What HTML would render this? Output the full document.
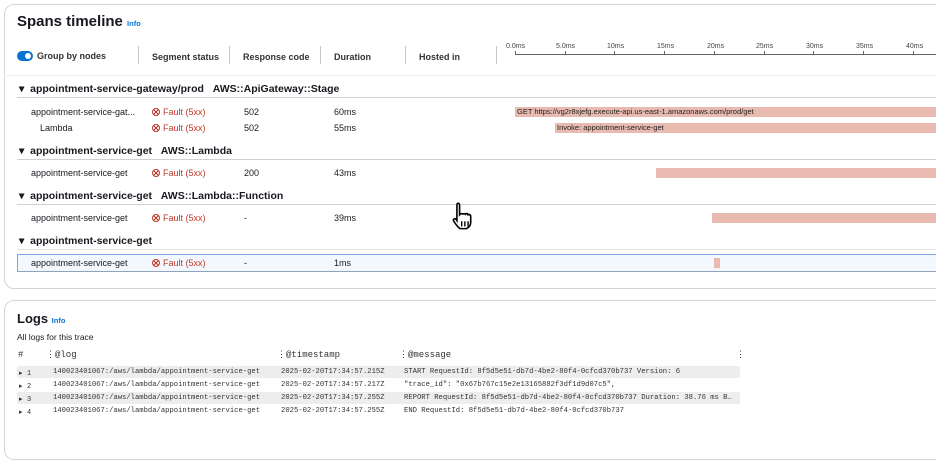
<!DOCTYPE html>
<html><head><style>
*{margin:0;padding:0;box-sizing:border-box}
body{width:936px;height:438px;overflow:hidden;background:#fff;font-family:"Liberation Sans",sans-serif;color:#16191f;position:relative}
.a{position:absolute;white-space:nowrap}
.panel{position:absolute;border:1px solid #d5d5d5;border-radius:10px;background:#fff}
.h{font-size:9px;font-weight:bold;color:#333}
.sep{position:absolute;width:1px;background:#c6c6c6}
.g{font-size:10.5px;font-weight:bold}
.r{font-size:9px}
.f{font-size:9px;color:#c0392b}
.f:before{content:"";display:inline-block;width:8px;height:8px;border:1.2px solid #c0392b;border-radius:50%;margin-right:3px;vertical-align:-1px;box-sizing:border-box;background:linear-gradient(45deg,transparent 44%,#c0392b 44%,#c0392b 56%,transparent 56%),linear-gradient(-45deg,transparent 44%,#c0392b 44%,#c0392b 56%,transparent 56%)}
.line{position:absolute;height:1px;background:#d0d0d0;left:17px;right:0}
.bar{position:absolute;background:#e8bab0;height:10px;font-size:7.5px;line-height:10px;padding-left:2px;color:#222}
.tk{position:absolute;top:43px;font-size:7px;color:#444}
.tt{position:absolute;top:51px;width:1px;height:4px;background:#666}
.m{font-family:"Liberation Mono",monospace;font-size:7.2px;color:#333}
.lr{position:absolute;left:17px;width:723px;height:12px}
</style></head><body>
<div class="panel" style="left:4px;top:4px;width:960px;height:285px"></div>
<div class="a" style="left:17px;top:13px;font-size:15px;font-weight:bold">Spans timeline <span style="font-size:7.5px;color:#0972d3">Info</span></div>
<div class="a" style="left:17px;top:51px;width:16px;height:10px;border-radius:5px;background:#0972d3"><div style="position:absolute;right:2px;top:2px;width:6px;height:6px;border-radius:50%;background:#fff"></div></div>
<div class="a h" style="left:37px;top:51px">Group by nodes</div>
<div class="sep" style="left:138px;top:46px;height:18px"></div>
<div class="a h" style="left:152px;top:52px">Segment status</div>
<div class="sep" style="left:229px;top:46px;height:18px"></div>
<div class="a h" style="left:243px;top:52px">Response code</div>
<div class="sep" style="left:320px;top:46px;height:18px"></div>
<div class="a h" style="left:334px;top:52px">Duration</div>
<div class="sep" style="left:405px;top:46px;height:18px"></div>
<div class="a h" style="left:419px;top:52px">Hosted in</div>
<div class="sep" style="left:496px;top:46px;height:18px"></div>
<div class="a" style="left:515px;top:54px;width:421px;height:1px;background:#666"></div>
<div class="tk" style="left:506px">0.0ms</div><div class="tt" style="left:515px"></div>
<div class="tk" style="left:556px">5.0ms</div><div class="tt" style="left:565px"></div>
<div class="tk" style="left:607px">10ms</div><div class="tt" style="left:614px"></div>
<div class="tk" style="left:657px">15ms</div><div class="tt" style="left:664px"></div>
<div class="tk" style="left:707px">20ms</div><div class="tt" style="left:714px"></div>
<div class="tk" style="left:756px">25ms</div><div class="tt" style="left:764px"></div>
<div class="tk" style="left:806px">30ms</div><div class="tt" style="left:813px"></div>
<div class="tk" style="left:856px">35ms</div><div class="tt" style="left:863px"></div>
<div class="tk" style="left:906px">40ms</div><div class="tt" style="left:913px"></div>
<div class="a" style="left:4px;top:75px;width:932px;height:1px;background:#f0f0f0"></div>

<div class="a g" style="left:19px;top:83px">▾&nbsp; appointment-service-gateway/prod &nbsp;&nbsp;AWS::ApiGateway::Stage</div>
<div class="line" style="top:97px"></div>
<div class="a r" style="left:31px;top:107px">appointment-service-gat...</div>
<div class="a f" style="left:152px;top:107px">Fault (5xx)</div>
<div class="a r" style="left:244px;top:107px">502</div>
<div class="a r" style="left:334px;top:107px">60ms</div>
<div class="bar" style="left:515px;right:0;top:107px">GET https://vg2r8xjefg.execute-api.us-east-1.amazonaws.com/prod/get</div>
<div class="a r" style="left:40px;top:123px">Lambda</div>
<div class="a f" style="left:152px;top:123px">Fault (5xx)</div>
<div class="a r" style="left:244px;top:123px">502</div>
<div class="a r" style="left:334px;top:123px">55ms</div>
<div class="bar" style="left:555px;right:0;top:123px">Invoke: appointment-service-get</div>

<div class="a g" style="left:19px;top:145px">▾&nbsp; appointment-service-get &nbsp;&nbsp;AWS::Lambda</div>
<div class="line" style="top:159px"></div>
<div class="a r" style="left:31px;top:168px">appointment-service-get</div>
<div class="a f" style="left:152px;top:168px">Fault (5xx)</div>
<div class="a r" style="left:244px;top:168px">200</div>
<div class="a r" style="left:334px;top:168px">43ms</div>
<div class="bar" style="left:656px;right:0;top:168px"></div>

<div class="a g" style="left:19px;top:190px">▾&nbsp; appointment-service-get &nbsp;&nbsp;AWS::Lambda::Function</div>
<div class="line" style="top:204px"></div>
<div class="a r" style="left:31px;top:213px">appointment-service-get</div>
<div class="a f" style="left:152px;top:213px">Fault (5xx)</div>
<div class="a r" style="left:244px;top:213px">-</div>
<div class="a r" style="left:334px;top:213px">39ms</div>
<div class="bar" style="left:712px;right:0;top:213px"></div>

<div class="a g" style="left:19px;top:235px">▾&nbsp; appointment-service-get</div>
<div class="line" style="top:249px;background:#e5e5e5"></div>
<div class="a" style="left:17px;top:254px;width:925px;height:18px;border:1px solid #7aa7e6;border-bottom-color:#8fa3bd;background:#f2f8fd"></div>
<div class="a r" style="left:31px;top:258px">appointment-service-get</div>
<div class="a f" style="left:152px;top:258px">Fault (5xx)</div>
<div class="a r" style="left:244px;top:258px">-</div>
<div class="a r" style="left:334px;top:258px">1ms</div>
<div class="bar" style="left:714px;width:6px;top:258px"></div>

<svg class="a" style="left:450px;top:201px" width="34" height="34" viewBox="0 0 32 32"><path d="M7 2c1.5 0 2 1 2 2v9l1-1c1-.5 2 0 2 1 0-1 1.5-1.5 2.5-.5 .5-1 2-1 2.5.5 .5-.5 2-.5 2.5 1v6c0 3-2 5-4 6h-6c-2-1-4-4-6-7-1-1.5.5-3 2-2l1 1.5V4c0-1.2.5-2 1.5-2z" fill="#fff" stroke="#000" stroke-width="1.5"/><path d="M11 19v5M14 19v5M17 19v5" stroke="#000" stroke-width="1.3"/></svg>

<div class="panel" style="left:4px;top:300px;width:960px;height:160px"></div>
<div class="a" style="left:17px;top:311px;font-size:13px;font-weight:bold">Logs <span style="font-size:7.5px;color:#0972d3">Info</span></div>
<div class="a" style="left:17px;top:332px;font-size:8.5px;color:#222">All logs for this trace</div>
<div class="a m" style="left:18px;top:350px;font-size:9px">#</div>
<div class="a m" style="left:46px;top:350px;font-size:9px">⋮@log</div>
<div class="a m" style="left:277px;top:350px;font-size:9px">⋮@timestamp</div>
<div class="a m" style="left:399px;top:350px;font-size:9px">⋮@message</div>
<div class="a m" style="left:736px;top:350px;font-size:9px">⋮</div>
<div class="lr" style="top:366px;background:#ededed"></div>
<div class="lr" style="top:392px;background:#ededed"></div>
<div class="a m" style="left:19px;top:368px">▸ 1</div><div class="a m" style="left:53px;top:368px">140023401067:/aws/lambda/appointment-service-get</div><div class="a m" style="left:281px;top:368px">2025-02-20T17:34:57.215Z</div><div class="a m" style="left:404px;top:368px">START RequestId: 8f5d5e51-db7d-4be2-80f4-0cfcd370b737 Version: 6</div>
<div class="a m" style="left:19px;top:381px">▸ 2</div><div class="a m" style="left:53px;top:381px">140023401067:/aws/lambda/appointment-service-get</div><div class="a m" style="left:281px;top:381px">2025-02-20T17:34:57.217Z</div><div class="a m" style="left:404px;top:381px">"trace_id": "0x67b767c15e2e13165882f3df1d9d07c5",</div>
<div class="a m" style="left:19px;top:394px">▸ 3</div><div class="a m" style="left:53px;top:394px">140023401067:/aws/lambda/appointment-service-get</div><div class="a m" style="left:281px;top:394px">2025-02-20T17:34:57.255Z</div><div class="a m" style="left:404px;top:394px">REPORT RequestId: 8f5d5e51-db7d-4be2-80f4-0cfcd370b737 Duration: 38.76 ms B…</div>
<div class="a m" style="left:19px;top:407px">▸ 4</div><div class="a m" style="left:53px;top:407px">140023401067:/aws/lambda/appointment-service-get</div><div class="a m" style="left:281px;top:407px">2025-02-20T17:34:57.255Z</div><div class="a m" style="left:404px;top:407px">END RequestId: 8f5d5e51-db7d-4be2-80f4-0cfcd370b737</div>
</body></html>
